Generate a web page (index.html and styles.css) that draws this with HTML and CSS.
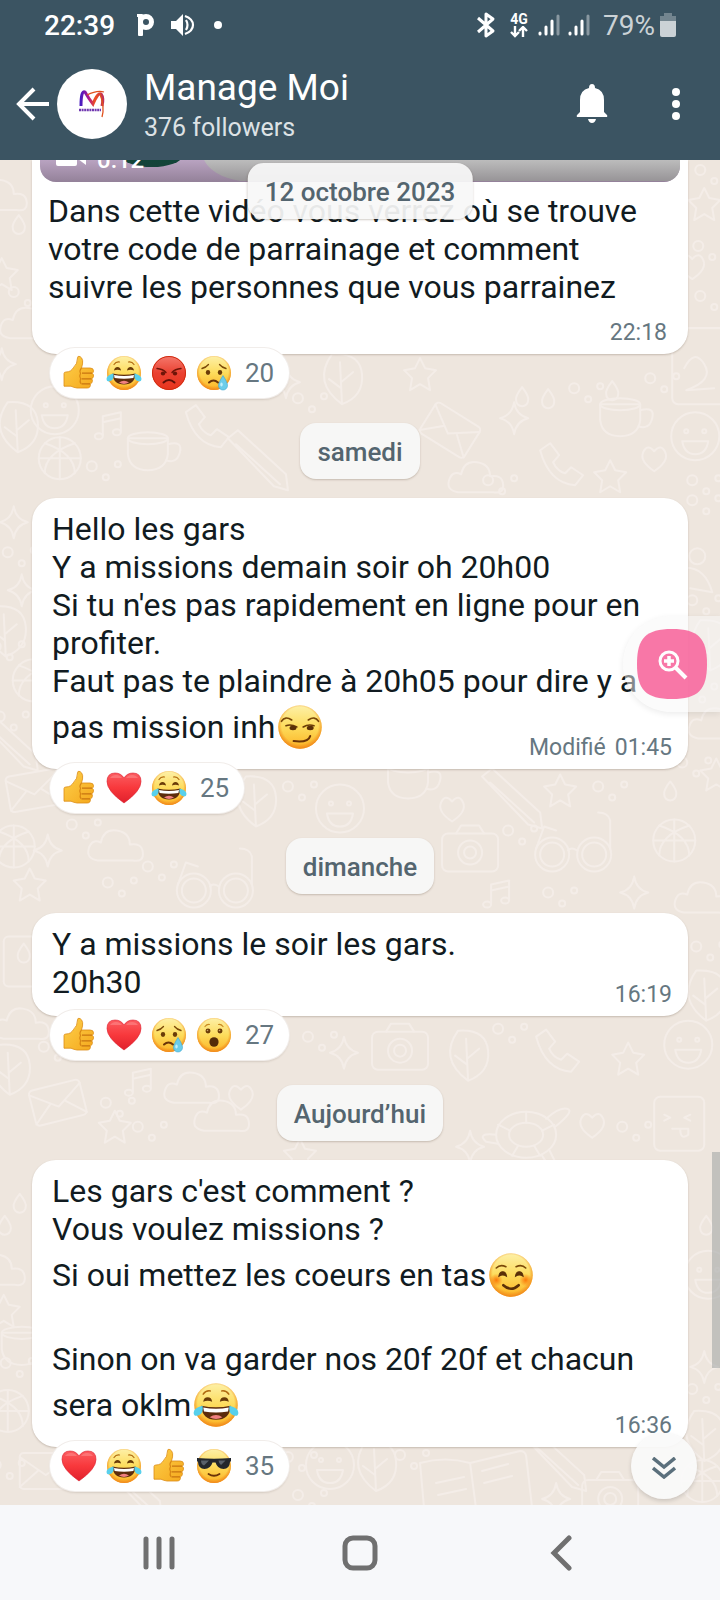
FILE: index.html
```html
<!DOCTYPE html>
<html lang="fr">
<head>
<meta charset="utf-8">
<meta name="viewport" content="width=device-width, initial-scale=1">
<title>Manage Moi</title>
<link rel="stylesheet" href="styles.css">
</head>
<body>
<svg class="defs" aria-hidden="true">
  <defs>
    <linearGradient id="g-face" x1="0" y1="0" x2="0" y2="1">
      <stop offset="0" stop-color="#fdf0a8"/><stop offset=".5" stop-color="#fddc5c"/><stop offset="1" stop-color="#fcb324"/>
    </linearGradient>
    <radialGradient id="g-rim" cx=".5" cy=".46" r=".54">
      <stop offset=".78" stop-color="#f08a1c" stop-opacity="0"/><stop offset="1" stop-color="#f0861c"/>
    </radialGradient>
    <linearGradient id="g-red" x1="0" y1="0" x2="0" y2="1">
      <stop offset="0" stop-color="#f4786c"/><stop offset=".5" stop-color="#ea4232"/><stop offset="1" stop-color="#e8341c"/>
    </linearGradient>
    <linearGradient id="g-heart" x1="0" y1="0" x2="0" y2="1">
      <stop offset="0" stop-color="#fb5c60"/><stop offset=".5" stop-color="#f8383c"/><stop offset="1" stop-color="#e0202c"/>
    </linearGradient>
    <linearGradient id="g-hand" x1="0" y1="0" x2="1" y2="1">
      <stop offset="0" stop-color="#fdd04c"/><stop offset="1" stop-color="#f5a81c"/>
    </linearGradient>
    <radialGradient id="g-blush"><stop offset="0" stop-color="#fb7a08"/><stop offset="1" stop-color="#fb7a08" stop-opacity="0"/></radialGradient>
    <linearGradient id="g-logo" x1="0" x2="1"><stop offset="0" stop-color="#4a1cc0"/><stop offset=".35" stop-color="#b01890"/><stop offset=".65" stop-color="#f0501c"/><stop offset="1" stop-color="#c03058"/></linearGradient>
  </defs>
  <symbol id="face" viewBox="0 0 36 36"><circle cx="18" cy="18" r="17" fill="url(#g-face)"/><circle cx="18" cy="18" r="17" fill="url(#g-rim)"/></symbol>
  <symbol id="joy" viewBox="0 0 36 36">
    <use href="#face"/>
    <path d="M8 9.500q2-3 5.500-2.500M28 9.500q-2-3-5.500-2.500" fill="none" stroke="#b06a10" stroke-width="1.200" stroke-linecap="round"/>
    <path d="M8 15.500q.5-3.500 3.500-3.500t3.500 3.500q-3.500-1.500-7 0zM21 15.500q.5-3.500 3.500-3.500t3.500 3.500q-3.500-1.500-7 0z" fill="#6a3c08"/>
    <path d="M6.500 18.500q11.500 2.500 23 0q-.5 11-11.500 11t-11.500-11z" fill="#5c2c0c"/>
    <path d="M8 20q10 2 20 0l-.6 3q-9.400 1.600-18.800 0z" fill="#fff"/>
    <path d="M13 27.500q5-3.500 10 0q-5 2.800-10 0z" fill="#f08080"/>
    <path d="M7.500 18.500q1 6-3 7.500t-4-2q0-4 7-5.500zM28.500 18.500q-1 6 3 7.500t4-2q0-4-7-5.500z" fill="#58d0ec"/>
  </symbol>
  <symbol id="angry" viewBox="0 0 36 36">
    <circle cx="18" cy="18" r="17" fill="url(#g-red)"/><circle cx="18" cy="18" r="16.500" fill="none" stroke="#d02c10"/>
    <path d="M6 13.500q6 .5 9 4M30 13.500q-6 .5-9 4" fill="none" stroke="#6e1408" stroke-width="1.400" stroke-linecap="round"/>
    <ellipse cx="12" cy="18.500" rx="2.200" ry="2" fill="#6e1408"/><ellipse cx="24" cy="18.500" rx="2.200" ry="2" fill="#6e1408"/>
    <path d="M12.500 27.500q5.500-5 11 0" fill="none" stroke="#5e1008" stroke-width="2" stroke-linecap="round"/>
  </symbol>
  <symbol id="cry" viewBox="0 0 36 36">
    <use href="#face"/>
    <path d="M6 13.500q4-1 6.500-4M30 13.500q-4-1-6.500-4" fill="none" stroke="#7a4808" stroke-width="1.300" stroke-linecap="round"/>
    <ellipse cx="12" cy="17.500" rx="2.200" ry="2.400" fill="#6a3c08"/><ellipse cx="24" cy="17.500" rx="2.200" ry="2.400" fill="#6a3c08"/>
    <path d="M13 27.500q4.500-4 9 0" fill="none" stroke="#6a3408" stroke-width="2" stroke-linecap="round"/>
    <path d="M27 20.500q4.500 7 4.500 10a4.500 4.500 0 0 1-9 0q0-3 4.500-10z" fill="#6ccdea" stroke="#3ca8d0" stroke-width=".6"/>
    <ellipse cx="25.500" cy="29.500" rx="1.200" ry="2" fill="#c4f0fb"/>
  </symbol>
  <symbol id="wow" viewBox="0 0 36 36">
    <use href="#face"/>
    <path d="M9 9.500q2-2.500 4.500-2M27 9.500q-2-2.500-4.500-2" fill="none" stroke="#c88820" stroke-width="1.200" stroke-linecap="round"/>
    <ellipse cx="12" cy="14" rx="2.500" ry="2.400" fill="#6a3c08"/><ellipse cx="24" cy="14" rx="2.500" ry="2.400" fill="#6a3c08"/>
    <circle cx="11.500" cy="13.500" r=".8" fill="#c8a070"/><circle cx="23.500" cy="13.500" r=".8" fill="#c8a070"/>
    <ellipse cx="18" cy="25" rx="4.600" ry="4.800" fill="#542c08"/>
  </symbol>
  <symbol id="cool" viewBox="0 0 36 36">
    <use href="#face"/>
    <path d="M1 10q17 1.600 34 0v3l-1 1q-.5 7-6.500 7t-8-6.500h-3q-2 6.500-8 6.500t-6.500-7l-1-1z" fill="#23272c"/>
    <path d="M5 12.500h8l-5 5q-3-1-3-5zM22.500 12.500h7l-4.500 4.500q-2-1-2.500-4.500z" fill="#59616a"/>
    <path d="M12.500 26q5.500 3.500 11 0" fill="none" stroke="#6a3408" stroke-width="1.800" stroke-linecap="round"/>
  </symbol>
  <symbol id="smirk" viewBox="0 0 36 36">
    <use href="#face"/>
    <path d="M3.500 13.500q3-4.500 8-1M32.500 13.500q-3-4.500-8-1" fill="none" stroke="#7a4808" stroke-width="1.300" stroke-linecap="round"/>
    <path d="M7 17q4-1.500 8.500 1M20.500 18q4-2.500 8.500-1" fill="none" stroke="#6a3c08" stroke-width="1.300" stroke-linecap="round"/>
    <ellipse cx="12.500" cy="18.800" rx="2.700" ry="1.700" fill="#5a3008"/><ellipse cx="26" cy="18.800" rx="2.700" ry="1.700" fill="#5a3008"/>
    <path d="M13 29q11.500 1.500 13-4" fill="none" stroke="#6a3408" stroke-width="1.600" stroke-linecap="round"/>
  </symbol>
  <symbol id="smile" viewBox="0 0 36 36">
    <use href="#face"/>
    <circle cx="6.500" cy="22" r="5" fill="url(#g-blush)"/><circle cx="29.500" cy="22" r="5" fill="url(#g-blush)"/>
    <path d="M6.500 12.500q3-3 7.500-1M29.500 12.500q-3-3-7.500-1" fill="none" stroke="#7a4808" stroke-width="1.300" stroke-linecap="round"/>
    <path d="M8.500 19q.5-3.500 3-3.500t3 3.500q-3-2-6 0zM21.500 19q.5-3.500 3-3.500t3 3.500q-3-2-6 0z" fill="#5a3008" stroke="#5a3008" stroke-width=".8"/>
    <path d="M12 26q6 5.500 12 0" fill="none" stroke="#5a3008" stroke-width="2" stroke-linecap="round"/>
  </symbol>
  <symbol id="heart" viewBox="0 0 36 36">
    <path d="M18 33Q1 21 1 11.500Q1 3 9 3q6 0 9 5q3-5 9-5q8 0 8 8.500Q35 21 18 33z" fill="url(#g-heart)" stroke="#dc2030" stroke-width=".6"/>
    <path d="M4 8q2-3 6-3t6 3zM20 8q2-3 6-3t6 3z" fill="#ff9a9a" opacity=".45"/>
  </symbol>
  <symbol id="thumb" viewBox="0 0 36 36">
    <path d="M3 18.500q0-1.500 2-1.500q5 0 7.500-4.500Q16.500 9 16.500 3q0-2.500 2.500-1.500q4.500 2.500 1.500 11.500h8.500q3.500 0 3.500 2.800 0 1.700-1.200 2.400 1.500 1 1.200 3t-1.800 2.600q1 1 .6 2.800t-2 2.400q.6 3.800-3 4H16q-3.500-.5-6-1.800H3z" fill="url(#g-hand)" stroke="#dc8c14" stroke-width=".8"/>
    <path d="M21 18.200h10M20.500 23.800h10M20.500 28.800h8.500" fill="none" stroke="#c87410" stroke-width="1.200"/>
    <path d="M20.500 13q-2.500 3-1 5.200-1.500 2.800 0 5.600-1 3 .5 5" fill="none" stroke="#d88614" stroke-width="1.200"/>
  </symbol>
  <!-- wallpaper doodles -->
  <g id="d-star"><path d="M0-16l5 10 11 2-8 8 2 12-10-6-10 6 2-12-8-8 11-2z"/></g>
  <g id="d-spark"><path d="M0-16q2 13 14 16q-12 3-14 16q-2-13-14-16q12-3 14-16z"/></g>
  <g id="d-drop"><path d="M0-9q7 9 6 13a6 6 0 0 1-12 0q-1-4 6-13z"/></g>
  <g id="d-cloud"><path d="M-22 14q-12-2-9-12t12-6q3-14 16-12t13 14q12-2 13 8t-10 8z"/></g>
  <g id="d-note"><path d="M-9 9V-10l18-4V5M-9-4l18-4"/><ellipse cx="-13" cy="10" rx="4" ry="3"/><ellipse cx="5" cy="6" rx="4" ry="3"/></g>
  <g id="d-mail"><rect x="-26" y="-18" width="52" height="36" rx="4"/><path d="M-26-14l26 18 26-18M-26 16l18-16M26 16L8 0"/></g>
  <g id="d-glasses"><circle cx="-20" cy="4" r="17"/><circle cx="-20" cy="4" r="12"/><circle cx="22" cy="4" r="17"/><circle cx="22" cy="4" r="12"/><path d="M-4 0q3-4 9 0M-36-2l8-22 12 4M38-2v-28q-2-8-12-8"/></g>
  <g id="d-heart"><path d="M0 11q-15-10-11-19t11-1q7-8 11 1T0 11z"/></g>
  <g id="d-face"><circle r="24"/><circle cx="-9" cy="-5" r="2"/><circle cx="9" cy="-5" r="2"/><path d="M-13 5h26q-2 13-13 13T-13 5z"/></g>
  <g id="d-phone"><path d="M-20-14l10-7 9 12-6 7q4 9 12 11l6-6 12 8-8 10q-26-2-35-35z"/></g>
  <g id="d-camera"><rect x="-28" y="-17" width="56" height="38" rx="6"/><path d="M-14-17l5-8h18l5 8"/><circle cy="2" r="12"/><circle cy="2" r="6"/></g>
  <g id="d-cup"><path d="M-22-12h40v16q-2 16-20 16t-20-16zM18-6q15-4 12 8t-14 8"/><ellipse cx="-2" cy="-12" rx="20" ry="6"/></g>
  <g id="d-book"><path d="M-52-20q25-7 50 0l50-12q5 0 6 5l6 52H-48zM-2-20l6 46M10-12l26-7M12 0l28-7M-36 0l28-6M-34 12l28-6"/></g>
  <g id="d-leaf"><path d="M0 30Q-30 8-10-20Q18-22 20 0T0 30zM0 30L-2-12M-1 8l12-10M-1 14l-12-9"/></g>
  <g id="d-pen"><path d="M-30-22l10-8 48 44 2 16-14-4zM-22-16l44 40"/></g>
  <g id="d-turtle"><ellipse rx="30" ry="23"/><ellipse rx="17" ry="12"/><path d="M-16-4l-12-6M16-4l12-6M0-12v-11M-8 11l-6 10M8 11l6 10M29-8q20-16 12-18t-21 10M-30 0q-20-2-10 7l12 2M16 21q8 14 13 6l-6-12"/></g>
  <g id="d-ball"><circle r="21"/><path d="M-15-15q30 10 30 30M15-15q-30 10-30 30M-21 0h42M0-21v42"/></g>
  <g id="d-dots"><circle cx="-12" cy="-4" r="5"/><circle cx="2" cy="7" r="3"/><circle cx="14" cy="-6" r="3"/></g>
</svg>

<header class="header">
  <div class="status">
    <time class="status-time">22:39</time>
    <svg class="status-notes" viewBox="0 0 90 28" aria-hidden="true">
      <rect x="1" y="3" width="5" height="22" rx="1" fill="#fff"/><rect x="0" y="3" width="5" height="3" fill="#fff"/><circle cx="9" cy="11" r="5.500" fill="none" stroke="#fff" stroke-width="5"/>
      <path d="M34 10h5l7-7v22l-7-7h-5z" fill="#fff"/><path d="M49 9q3 5 0 10M48 5q8 3 8 9t-8 9" fill="none" stroke="#fff" stroke-width="2.200"/><circle cx="81" cy="14" r="4" fill="#fff"/>
    </svg>
    <span class="spacer"></span>
    <svg class="status-bt" viewBox="0 0 20 28" aria-hidden="true"><path d="M2 7l15 13-7 5V3l7 5L2 21" fill="none" stroke="#fff" stroke-width="3" stroke-linejoin="round"/></svg>
    <span class="network"><span>4G</span>
      <svg viewBox="0 0 18 12" aria-hidden="true"><path d="M5 0v9M1 6l4 4 4-4M13 11V2M9 5l4-4 4 4" fill="none" stroke="#fff" stroke-width="2.400"/></svg>
    </span>
    <svg class="status-signal" viewBox="0 0 52 24" aria-hidden="true" stroke="#fff" stroke-width="3" stroke-linecap="round">
      <path d="M2 20v1M8 14v7M14 8v13M32 20v1M38 14v7M44 8v13"/><path d="M20 3v18M50 3v18" opacity=".4"/>
    </svg>
    <span class="battery-text">79%</span>
    <svg class="status-battery" viewBox="0 0 16 24" aria-hidden="true"><path d="M4 0h8v3h4v6H0V3h4z" fill="#73858f"/><path d="M0 8h16v14q0 2-2 2H2q-2 0-2-2z" fill="#cbd2d6"/></svg>
  </div>
  <div class="appbar">
    <button class="icon-btn back" aria-label="Retour"><svg viewBox="0 0 34 34" width="34" height="34"><path d="M33 17H4M18 2L3 17l15 15" fill="none" stroke="#fff" stroke-width="4"/></svg></button>
    <svg class="avatar" viewBox="0 0 70 70" role="img" aria-label="Manage Moi">
      <circle cx="35" cy="35" r="35" fill="#fff"/>
      <path d="M24 37q0-16 4-14 4 7 8 12 5-12 8-10 3 4 1 12" fill="none" stroke="url(#g-logo)" stroke-width="3"/>
      <path d="M30 26q10-5 17-3M43 25q5 13 2 23" fill="none" stroke="#e0501c" stroke-width="1.300"/>
      <path d="M22 41h22" stroke="#7038b0" stroke-width="2.500" stroke-dasharray="2 .6"/>
    </svg>
    <div class="titles"><h1>Manage Moi</h1><p>376 followers</p></div>
    <button class="icon-btn" aria-label="Notifications"><svg viewBox="0 0 32 40" width="32" height="40" fill="#fff"><path d="M16 0q3 0 3 4 9 2 9 12v12l3 3q1 2-1 2H2q-2 0-1-2l3-3V16q0-10 9-12 0-4 3-4zM12 35h8q-1 4-4 4t-4-4z"/></svg></button>
    <button class="icon-btn more" aria-label="Menu"><svg viewBox="0 0 8 32" width="8" height="32" fill="#fff"><circle cx="4" cy="4" r="4"/><circle cx="4" cy="16" r="4"/><circle cx="4" cy="28" r="4"/></svg></button>
  </div>
</header>

<main class="chat">
  <svg class="wallpaper" viewBox="0 0 720 1344" preserveAspectRatio="xMidYMin slice" aria-hidden="true">
    <use href="#d-cloud" x="4" y="36"/><use href="#d-drop" x="19" y="64"/><use href="#d-star" x="2" y="114"/><use href="#d-dots" x="26" y="136"/><use href="#d-cloud" x="32" y="164"/><use href="#d-spark" x="2" y="204"/>
    <use href="#d-dots" x="712" y="14"/><use href="#d-star" x="704" y="44"/><use href="#d-dots" x="710" y="90"/><use href="#d-heart" x="692" y="108"/><use href="#d-dots" x="712" y="140"/><rect x="672" y="168" width="70" height="76" rx="6"/><path d="M684 208q10-20 20-4t-18 26l28-2"/>
    <use href="#d-face" x="55" y="250"/><use href="#d-leaf" x="18" y="262"/><use href="#d-note" x="112" y="266"/><use href="#d-ball" x="60" y="298"/><use href="#d-dots" x="104" y="310"/><use href="#d-cup" x="150" y="290"/><use href="#d-phone" x="206" y="266"/><use href="#d-spark" x="286" y="222"/><use href="#d-leaf" x="342" y="214"/><use href="#d-star" x="420" y="214"/><use href="#d-pen" x="258" y="300"/><use href="#d-dots" x="310" y="242"/><use href="#d-mail" x="450" y="270" transform="rotate(32 450 270)"/><use href="#d-spark" x="514" y="258"/><use href="#d-drop" x="522" y="236"/><use href="#d-drop" x="548" y="238"/><use href="#d-dots" x="586" y="232"/><use href="#d-drop" x="612" y="230"/><use href="#d-cup" x="622" y="256"/><use href="#d-phone" x="560" y="304"/><use href="#d-heart" x="654" y="300"/><use href="#d-face" x="695" y="276"/><use href="#d-dots" x="662" y="222"/><use href="#d-cloud" x="480" y="318"/><use href="#d-dots" x="500" y="324"/><use href="#d-star" x="610" y="316"/><use href="#d-dots" x="704" y="324"/>
    <use href="#d-spark" x="14" y="362"/><use href="#d-dots" x="20" y="396"/><use href="#d-spark" x="22" y="430"/><use href="#d-leaf" x="6" y="466"/><use href="#d-dots" x="8" y="490"/><use href="#d-ball" x="34" y="520"/><use href="#d-dots" x="12" y="560"/><use href="#d-pen" x="8" y="580"/>
    <use href="#d-dots" x="704" y="344"/><circle cx="697" cy="396" r="8"/><path d="M680 408q24-4 32 24l-22-4"/><use href="#d-dots" x="704" y="444"/><use href="#d-leaf" x="710" y="480"/><use href="#d-dots" x="700" y="532"/><use href="#d-cloud" x="720" y="564"/>
    <use href="#d-mail" x="34" y="630" transform="rotate(-10 34 630)"/><use href="#d-dots" x="84" y="668"/><use href="#d-ball" x="14" y="686"/><use href="#d-spark" x="48" y="690"/><use href="#d-cloud" x="120" y="686"/><use href="#d-star" x="30" y="724"/><use href="#d-dots" x="120" y="726"/><use href="#d-glasses" x="214" y="726"/><use href="#d-dots" x="160" y="710"/><use href="#d-leaf" x="256" y="636"/><use href="#d-dots" x="300" y="630"/><use href="#d-face" x="340" y="648"/><use href="#d-cup" x="410" y="618"/><use href="#d-pen" x="512" y="638"/><use href="#d-star" x="560" y="630"/><use href="#d-dots" x="610" y="630"/><use href="#d-drop" x="670" y="630"/><use href="#d-dots" x="694" y="606"/><use href="#d-star" x="716" y="614"/><use href="#d-glasses" x="572" y="690"/><use href="#d-ball" x="674" y="680"/><use href="#d-camera" x="470" y="690"/><use href="#d-dots" x="520" y="674"/><use href="#d-heart" x="452" y="650"/><use href="#d-spark" x="634" y="732"/><use href="#d-dots" x="560" y="736"/><use href="#d-cloud" x="706" y="738"/><use href="#d-note" x="500" y="734"/>
    <use href="#d-drop" x="24" y="792"/><rect x="4" y="776" width="42" height="50" rx="5"/><use href="#d-dots" x="708" y="790"/><use href="#d-leaf" x="706" y="830"/>
    <use href="#d-cloud" x="26" y="864"/><use href="#d-leaf" x="10" y="904"/><use href="#d-dots" x="56" y="890"/><use href="#d-mail" x="58" y="942" transform="rotate(-14 58 942)"/><use href="#d-note" x="142" y="922"/><use href="#d-dots" x="118" y="946"/><use href="#d-star" x="115" y="966"/><use href="#d-cloud" x="196" y="928"/><use href="#d-cloud" x="226" y="956"/><use href="#d-heart" x="241" y="938"/><use href="#d-dots" x="150" y="970"/><use href="#d-dots" x="320" y="880"/><use href="#d-spark" x="344" y="892"/><use href="#d-camera" x="400" y="888"/><use href="#d-leaf" x="468" y="890"/><use href="#d-dots" x="510" y="872"/><use href="#d-phone" x="556" y="890"/><use href="#d-star" x="628" y="898"/><use href="#d-face" x="688" y="884"/><use href="#d-turtle" x="526" y="974"/><use href="#d-heart" x="592" y="966"/><use href="#d-dots" x="634" y="970"/><rect x="654" y="936" width="50" height="54" rx="6"/><path d="M664 954l6 3-6 3M690 954l-6 3 6 3M672 968h16v6q-8 6-8-6"/><use href="#d-spark" x="470" y="986"/><use href="#d-star" x="300" y="994"/>
    <use href="#d-drop" x="20" y="1042"/><use href="#d-drop" x="5" y="1064"/><use href="#d-cloud" x="2" y="1110"/><use href="#d-star" x="4" y="1150"/><use href="#d-cup" x="24" y="1184"/><use href="#d-dots" x="18" y="1206"/><use href="#d-ball" x="8" y="1250"/><use href="#d-drop" x="706" y="1064"/><use href="#d-face" x="708" y="1114"/><use href="#d-spark" x="704" y="1206"/><use href="#d-dots" x="704" y="1232"/><use href="#d-leaf" x="704" y="1270"/>
    <use href="#d-dots" x="8" y="1308"/><use href="#d-mail" x="46" y="1310"/><use href="#d-pen" x="132" y="1326"/><use href="#d-dots" x="300" y="1300"/><use href="#d-face" x="330" y="1304"/><use href="#d-leaf" x="376" y="1300"/><use href="#d-dots" x="412" y="1298"/><use href="#d-book" x="472" y="1322"/><use href="#d-pen" x="556" y="1300"/><use href="#d-spark" x="556" y="1338"/><use href="#d-camera" x="610" y="1336"/><use href="#d-dots" x="310" y="1338"/><use href="#d-ball" x="702" y="1320"/>
  </svg>

  <article class="bubble bubble-video">
    <div class="video">
      <svg class="video-scene" viewBox="0 0 640 22" preserveAspectRatio="none" aria-hidden="true"><rect width="640" height="22" fill="#b9a3c1"/><ellipse cx="112" cy="-4" rx="30" ry="11" fill="#114438"/><path d="M164 0h476v21H200q-28-5-36-21z" fill="#bcbcbc"/></svg>
      <svg class="video-icon" viewBox="0 0 30 16" width="30" height="16" fill="#fff" aria-hidden="true"><rect width="21" height="16" rx="2"/><path d="M22 9l8-7v13z"/></svg>
      <span>0:12</span>
    </div>
    <p class="text">Dans cette vidéo vous verrez où se trouve votre code de parrainage et comment suivre les personnes que vous parrainez</p>
    <footer class="meta"><time>22:18</time></footer>
  </article>
  <button class="reactions" aria-label="20 réactions"><svg><use href="#thumb"/></svg><svg><use href="#joy"/></svg><svg><use href="#angry"/></svg><svg><use href="#cry"/></svg><span>20</span></button>

  <div class="date">samedi</div>
  <article class="bubble">
    <p class="text">Hello les gars<br>Y a missions demain soir oh 20h00<br>Si tu n'es pas rapidement en ligne pour en profiter.<br>Faut pas te plaindre à 20h05 pour dire y a pas mission inh<svg class="emoji"><use href="#smirk"/></svg></p>
    <footer class="meta"><span>Modifié</span><time>01:45</time></footer>
  </article>
  <button class="reactions" aria-label="25 réactions"><svg><use href="#thumb"/></svg><svg><use href="#heart"/></svg><svg><use href="#joy"/></svg><span>25</span></button>

  <div class="date">dimanche</div>
  <article class="bubble">
    <p class="text">Y a missions le soir les gars.<br>20h30</p>
    <footer class="meta"><time>16:19</time></footer>
  </article>
  <button class="reactions" aria-label="27 réactions"><svg><use href="#thumb"/></svg><svg><use href="#heart"/></svg><svg><use href="#cry"/></svg><svg><use href="#wow"/></svg><span>27</span></button>

  <div class="date">Aujourd’hui</div>
  <article class="bubble">
    <p class="text">Les gars c'est comment ?<br>Vous voulez missions ?<br>Si oui mettez les coeurs en tas<svg class="emoji"><use href="#smile"/></svg><br><br>Sinon on va garder nos 20f 20f et chacun sera oklm<svg class="emoji"><use href="#joy"/></svg></p>
    <footer class="meta"><time>16:36</time></footer>
  </article>
  <button class="reactions" aria-label="35 réactions"><svg><use href="#heart"/></svg><svg><use href="#joy"/></svg><svg><use href="#thumb"/></svg><svg><use href="#cool"/></svg><span>35</span></button>

  <div class="date date-floating">12 octobre 2023</div>
  <div class="zoom-handle">
    <button class="zoom-btn" aria-label="Zoom">
      <svg viewBox="0 0 70 70" width="70" height="70"><path d="M35 0C61 0 70 9 70 35S61 70 35 70 0 61 0 35 9 0 35 0z" fill="#f8699f"/><g fill="none" stroke="#fff"><circle cx="32" cy="32" r="9" stroke-width="3"/><path d="M39 39l10 10" stroke-width="4"/><path d="M27 32h10M32 27v10" stroke-width="3.500"/></g></svg>
    </button>
  </div>
  <div class="scrollbar"></div>
  <button class="scroll-down" aria-label="Aller en bas"><svg viewBox="0 0 24 22" width="24" height="22" fill="none" stroke="#5b707c" stroke-width="3.500"><path d="M1 1l11 9 11-9M1 11l11 9 11-9"/></svg></button>
</main>

<nav class="nav" aria-label="Navigation système">
  <button class="icon-btn" aria-label="Applications récentes"><svg viewBox="0 0 36 36" width="36" height="36" stroke="#707070" stroke-width="5" stroke-linecap="round"><path d="M5 4v28M18 4v28M31 4v28"/></svg></button>
  <button class="icon-btn" aria-label="Accueil"><svg viewBox="0 0 36 36" width="36" height="36"><rect x="3" y="3" width="30" height="30" rx="8" fill="none" stroke="#707070" stroke-width="5"/></svg></button>
  <button class="icon-btn" aria-label="Retour"><svg viewBox="0 0 36 36" width="36" height="36"><path d="M26 3L11 18l15 15" fill="none" stroke="#707070" stroke-width="5" stroke-linecap="round"/></svg></button>
</nav>
</body>
</html>
```
FILE: styles.css
```css
* { box-sizing: border-box; }
body {
  margin: 0;
  min-height: 100vh;
  display: flex;
  flex-direction: column;
  font-family: Roboto, "Noto Sans", sans-serif;
  color: #111b21;
  background: #eee6de;
}
h1, p { margin: 0; font-weight: 400; }
button { margin: 0; padding: 0; border: 0; background: none; font: inherit; color: inherit; cursor: pointer; }
svg { display: block; flex: none; }
.defs { position: absolute; width: 0; height: 0; }
.spacer { flex: 1; }

.header { background: #3b5462; color: #fff; position: relative; z-index: 2; }
.status { display: flex; align-items: center; height: 50px; padding: 0 44px; }
.status-time { font-size: 28px; font-weight: 500; }
.status-notes { width: 90px; height: 28px; margin-left: 22px; }
.status-bt { width: 20px; height: 28px; }
.network { display: flex; flex-direction: column; align-items: center; width: 18px; margin: 0 10px 0 14px; font-size: 14px; line-height: 14px; font-weight: 700; }
.network svg { width: 18px; height: 12px; }
.status-signal { width: 52px; height: 24px; }
.battery-text { margin: 0 5px 0 13px; font-size: 28px; color: #cbd2d6; }
.status-battery { width: 16px; height: 24px; }

.appbar { display: flex; align-items: center; height: 110px; padding: 0 40px 2px 16px; }
.icon-btn { display: flex; align-items: center; justify-content: center; }
.avatar { width: 70px; height: 70px; margin-left: 7px; }
.titles { flex: 1; display: flex; flex-direction: column; gap: 5px; margin-left: 17px; }
.titles h1 { font-size: 37px; line-height: 42px; }
.titles p { font-size: 25px; line-height: 28px; color: #dde2e5; }
.more { margin-left: 64px; }

.chat {
  flex: 1;
  position: relative;
  display: flex;
  flex-direction: column;
  overflow: hidden;
  padding: 0 32px 14px;
}
.wallpaper {
  position: absolute;
  inset: 0;
  width: 100%;
  height: 100%;
  fill: none;
  stroke: #f4ede8;
  stroke-width: 2;
  stroke-linejoin: round;
  stroke-linecap: round;
}
.bubble {
  position: relative;
  display: grid;
  padding: 12px 16px 9px;
  background: #fff;
  border-radius: 24px;
  box-shadow: 0 1px 2px rgba(80, 60, 40, .25);
}
.text, .meta { grid-column: 1; grid-row: 1; }
.text { padding: 0 4px 6px; font-size: 32px; line-height: 38px; }
.meta {
  align-self: end;
  justify-self: end;
  display: flex;
  gap: 9px;
  font-size: 23px;
  line-height: 24px;
  color: #667781;
}
.emoji { display: inline-block; width: 46px; height: 54px; margin-left: 2px; vertical-align: -16px; }

.bubble-video { padding: 0 8px 9px; border-top-left-radius: 0; border-top-right-radius: 0; }
.bubble-video .text { grid-row: 2; padding: 10px 8px 39px; }
.bubble-video .meta { grid-row: 2; padding-right: 13px; }
.video {
  position: relative;
  display: flex;
  align-items: flex-end;
  gap: 11px;
  height: 22px;
  padding: 0 16px 10px;
  overflow: hidden;
  border-radius: 0 0 16px 16px;
  color: #fff;
  font-size: 24px;
  line-height: 24px;
  font-weight: 500;
}
.video > * { position: relative; }
.video .video-scene { position: absolute; inset: 0; width: 100%; height: 100%; }
.video::after { content: ""; position: absolute; inset: 0; background: linear-gradient(transparent, rgba(60, 50, 60, .3)); }
.video-icon { margin-bottom: 6px; }
.video-icon, .video span { z-index: 1; }

.reactions {
  position: relative;
  align-self: flex-start;
  display: flex;
  align-items: center;
  gap: 9px;
  height: 50px;
  margin: -6px 0 0 18px;
  padding: 0 15px 0 11px;
  background: #fff;
  border-radius: 25px;
  box-shadow: 0 0 0 1px #f1edea, 0 2px 2px rgba(80, 60, 40, .15);
  font-size: 26px;
  color: #667781;
}
.reactions svg { width: 36px; height: 36px; }
.reactions span { margin-left: 4px; }

.date {
  position: relative;
  align-self: center;
  margin: 25px 0 19px;
  padding: 14px 17px 12px;
  font-size: 26px;
  line-height: 30px;
  font-weight: 500;
  color: #54656f;
  background: #f7f7f6;
  border-radius: 16px;
  box-shadow: 0 1px 2px rgba(80, 60, 40, .25);
}
.date-floating {
  position: absolute;
  top: 3px;
  left: 50%;
  margin: 0;
  transform: translateX(-50%);
  white-space: nowrap;
  background: rgba(247, 247, 247, .93);
}

.zoom-handle {
  position: absolute;
  top: 456px;
  right: 0;
  padding: 13px 13px 13px 14px;
  border-radius: 48px 0 0 48px;
  background: rgba(248, 248, 248, .5);
  box-shadow: 0 2px 6px rgba(0, 0, 0, .08);
}
.zoom-btn { display: block; opacity: .9; }
.scrollbar { position: absolute; top: 992px; right: 0; width: 8px; height: 216px; background: rgba(150, 155, 155, .5); }
.scroll-down {
  position: absolute;
  right: 23px;
  bottom: 6px;
  width: 66px;
  height: 66px;
  display: flex;
  align-items: center;
  justify-content: center;
  padding-top: 4px;
  border-radius: 50%;
  background: rgba(250, 250, 250, .93);
  box-shadow: 0 2px 4px rgba(0, 0, 0, .15);
}

.nav {
  display: flex;
  justify-content: space-around;
  align-items: center;
  height: 96px;
  padding: 0 59px;
  background: #f7f8fa;
}
```
